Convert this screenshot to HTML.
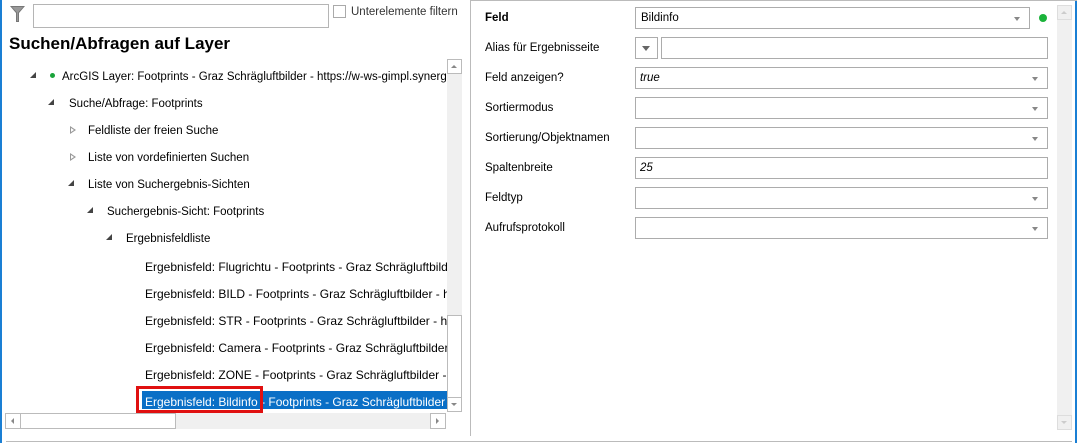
<!DOCTYPE html>
<html><head><meta charset="utf-8"><style>
*{margin:0;padding:0;box-sizing:border-box}
body{width:1077px;height:443px;background:#fff;font-family:"Liberation Sans",sans-serif;font-size:11.5px;color:#000;position:relative;overflow:hidden}
.a{position:absolute}
.t{position:absolute;white-space:nowrap}
.box{position:absolute;border:1px solid #acacac;background:#fff;height:22px}
.dd::after{content:"";position:absolute;right:9px;top:9px;border-left:3px solid transparent;border-right:3px solid transparent;border-top:4px solid #888}
.lbl{position:absolute;left:485px;white-space:nowrap}
.tri{position:absolute;width:0;height:0;border-left:6px solid transparent;border-bottom:6px solid #444}
.tro{position:absolute;width:0;height:0;border-top:4px solid transparent;border-bottom:4px solid transparent;border-left:6px solid #999}
.tro::after{content:"";position:absolute;left:-5px;top:-2px;border-top:2px solid transparent;border-bottom:2px solid transparent;border-left:3px solid #fff}
</style></head><body>
<div class="a" style="left:0;top:0;width:2px;height:443px;background:#1a7fd4"></div>
<div class="a" style="left:1075px;top:0;width:2px;height:443px;background:#1a7fd4"></div>
<div class="a" style="left:471px;top:0;width:606px;height:1px;background:#bbb"></div>
<div class="a" style="left:470px;top:0;width:1px;height:436px;background:#bbb"></div>
<div class="a" style="left:6px;top:441px;width:1066px;height:1px;background:#bbb"></div>

<svg class="a" style="left:10px;top:6px" width="15" height="16" viewBox="0 0 15 16"><path d="M0 0H15L9 7V16H6V7Z" fill="#777"/><path d="M2 1H13L8 6.5V15H7V6.5Z" fill="#999"/></svg>
<div class="box" style="left:33px;top:4px;width:296px;height:24px;border-color:#b5b5b5"></div>
<div class="a" style="left:333px;top:5px;width:13px;height:13px;border:1px solid #aaa"></div>
<div class="t" style="left:351px;top:6px;color:#333">Unterelemente filtern</div>
<div class="t" style="left:9px;top:34px;font-size:17px;font-weight:bold">Suchen/Abfragen auf Layer</div>

<div class="a" style="left:0;top:58px;width:447px;height:354px;overflow:hidden">
<div class="tri" style="left:30px;top:14px"></div>
<div class="a" style="left:50px;top:15px;width:5px;height:5px;border-radius:50%;background:#1aa33a"></div>
<div class="t" style="left:62px;top:13px">ArcGIS Layer: Footprints - Graz Schrägluftbilder - https://w-ws-gimpl.synergis.at</div>
<div class="tri" style="left:48px;top:41px"></div>
<div class="t" style="left:69px;top:40px">Suche/Abfrage: Footprints</div>
<div class="tro" style="left:70px;top:68px"></div>
<div class="t" style="left:88px;top:67px">Feldliste der freien Suche</div>
<div class="tro" style="left:70px;top:95px"></div>
<div class="t" style="left:88px;top:94px">Liste von vordefinierten Suchen</div>
<div class="tri" style="left:68px;top:122px"></div>
<div class="t" style="left:88px;top:121px">Liste von Suchergebnis-Sichten</div>
<div class="tri" style="left:87px;top:149px"></div>
<div class="t" style="left:107px;top:148px">Suchergebnis-Sicht: Footprints</div>
<div class="tri" style="left:106px;top:176px"></div>
<div class="t" style="left:126px;top:175px">Ergebnisfeldliste</div>
<div class="t" style="left:145px;top:202px;font-size:12px">Ergebnisfeld: Flugrichtu - Footprints - Graz Schrägluftbilder - https</div>
<div class="t" style="left:145px;top:229px;font-size:12px">Ergebnisfeld: BILD - Footprints - Graz Schrägluftbilder - https</div>
<div class="t" style="left:145px;top:256px;font-size:12px">Ergebnisfeld: STR - Footprints - Graz Schrägluftbilder - https</div>
<div class="t" style="left:145px;top:283px;font-size:12px">Ergebnisfeld: Camera - Footprints - Graz Schrägluftbilder - https</div>
<div class="t" style="left:145px;top:310px;font-size:12px">Ergebnisfeld: ZONE - Footprints - Graz Schrägluftbilder - https</div>
<div class="a" style="left:142px;top:333px;width:310px;height:18px;background:#0a6fc6"></div>
<div class="t" style="left:145px;top:337px;color:#fff;font-size:12px">Ergebnisfeld: Bildinfo - Footprints - Graz Schrägluftbilder - https</div>
</div>
<div class="a" style="left:136px;top:386px;width:127px;height:27px;border:3px solid #e01010"></div>

<div class="a" style="left:447px;top:59px;width:15px;height:353px;background:#f0f0f0"></div>
<div class="a" style="left:447px;top:59px;width:15px;height:15px;border:1px solid #bbb;background:#fff"></div>
<div class="a" style="left:451px;top:65px;border-left:3px solid transparent;border-right:3px solid transparent;border-bottom:3px solid #888"></div>
<div class="a" style="left:447px;top:315px;width:15px;height:84px;border:1px solid #bbb;background:#fff"></div>
<div class="a" style="left:447px;top:397px;width:15px;height:15px;border:1px solid #bbb;background:#fff"></div>
<div class="a" style="left:451px;top:403px;border-left:3px solid transparent;border-right:3px solid transparent;border-top:3px solid #888"></div>
<div class="a" style="left:5px;top:413px;width:441px;height:16px;background:#f0f0f0"></div>
<div class="a" style="left:5px;top:413px;width:16px;height:16px;border:1px solid #bbb;background:#fff"></div>
<div class="a" style="left:11px;top:418px;border-top:3px solid transparent;border-bottom:3px solid transparent;border-right:3px solid #888"></div>
<div class="a" style="left:20px;top:413px;width:156px;height:16px;border:1px solid #bbb;background:#fff"></div>
<div class="a" style="left:430px;top:413px;width:16px;height:16px;border:1px solid #bbb;background:#fff"></div>
<div class="a" style="left:436px;top:418px;border-top:3px solid transparent;border-bottom:3px solid transparent;border-left:3px solid #888"></div>

<div class="lbl" style="top:12px;font-weight:bold">Feld</div>
<div class="box dd" style="left:635px;top:7px;width:395px"><span class="t" style="left:5px;top:4px">Bildinfo</span></div>
<div class="a" style="left:1039px;top:14px;width:8px;height:8px;border-radius:50%;background:#1ab33a"></div>
<div class="lbl" style="top:42px">Alias für Ergebnisseite</div>
<div class="box" style="left:635px;top:37px;width:23px"></div>
<div class="a" style="left:642px;top:46px;border-left:4px solid transparent;border-right:4px solid transparent;border-top:5px solid #666"></div>
<div class="box" style="left:661px;top:37px;width:387px"></div>
<div class="lbl" style="top:72px">Feld anzeigen?</div>
<div class="box dd" style="left:635px;top:67px;width:413px"><span class="t" style="left:4px;top:4px;font-style:italic">true</span></div>
<div class="lbl" style="top:102px">Sortiermodus</div>
<div class="box dd" style="left:635px;top:97px;width:413px"></div>
<div class="lbl" style="top:132px">Sortierung/Objektnamen</div>
<div class="box dd" style="left:635px;top:127px;width:413px"></div>
<div class="lbl" style="top:162px">Spaltenbreite</div>
<div class="box" style="left:635px;top:157px;width:413px"><span class="t" style="left:4px;top:4px;font-style:italic">25</span></div>
<div class="lbl" style="top:192px">Feldtyp</div>
<div class="box dd" style="left:635px;top:187px;width:413px"></div>
<div class="lbl" style="top:222px">Aufrufsprotokoll</div>
<div class="box dd" style="left:635px;top:217px;width:413px"></div>

<div class="a" style="left:1057px;top:5px;width:15px;height:425px;background:#f0f0f0"></div>
<div class="a" style="left:1057px;top:5px;width:15px;height:15px;border:1px solid #ddd"></div>
<div class="a" style="left:1061px;top:11px;border-left:3px solid transparent;border-right:3px solid transparent;border-bottom:3px solid #ccc"></div>
<div class="a" style="left:1057px;top:415px;width:15px;height:15px;border:1px solid #ddd"></div>
<div class="a" style="left:1061px;top:421px;border-left:3px solid transparent;border-right:3px solid transparent;border-top:3px solid #ccc"></div>
</body></html>
